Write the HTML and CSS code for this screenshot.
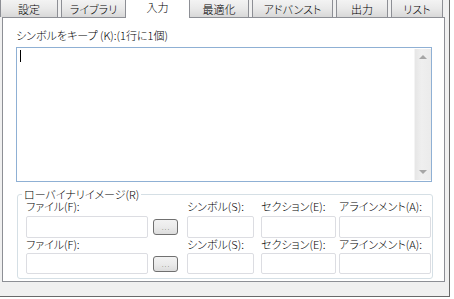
FILE: index.html
```html
<!DOCTYPE html>
<html lang="ja">
<head>
  <meta charset="UTF-8">
  <title>入力</title>
  <link rel="stylesheet" href="styles.css">
</head>
<body>
  <div class="window">
    <div class="tabs">
      <div class="tab tab-settings">設定</div>
      <div class="tab tab-library">ライブラリ</div>
      <div class="tab tab-active">入力</div>
      <div class="tab tab-optimize">最適化</div>
      <div class="tab tab-advanced">アドバンスト</div>
      <div class="tab tab-output">出力</div>
      <div class="tab tab-list">リスト</div>
    </div>

    <div class="panel">
      <div class="keep-label">シンボルをキープ (K):(1行に1個)</div>
      <div class="memo">
        <div class="memo-text"><span class="caret"></span></div>
        <div class="vscroll">
          <span class="arrow arrow-up"></span>
          <span class="arrow arrow-down"></span>
        </div>
      </div>

      <fieldset class="group">
        <legend>ローバイナリイメージ(R)</legend>
        <div class="image-grid">
          <span class="field-label col-file">ファイル(F):</span>
          <span class="field-label col-symbol">シンボル(S):</span>
          <span class="field-label col-section">セクション(E):</span>
          <span class="field-label col-align">アラインメント(A):</span>
          <span class="box box-file"></span>
          <span class="browse">...</span>
          <span class="box box-symbol"></span>
          <span class="box box-section"></span>
          <span class="box box-align"></span>

          <span class="field-label col-file">ファイル(F):</span>
          <span class="field-label col-symbol">シンボル(S):</span>
          <span class="field-label col-section">セクション(E):</span>
          <span class="field-label col-align">アラインメント(A):</span>
          <span class="box box-file"></span>
          <span class="browse">...</span>
          <span class="box box-symbol"></span>
          <span class="box box-section"></span>
          <span class="box box-align"></span>
        </div>
      </fieldset>
    </div>
  </div>
</body>
</html>
```

FILE: styles.css
```css
* { box-sizing: border-box; }
body { margin: 0; background: #fff; font-family: "Noto Sans CJK JP", "Noto Sans", sans-serif; font-size: 11px; font-weight: 300; color: #000; font-feature-settings: "palt"; }

.window { width: 450px; height: 297px; background: #f0f0f0; border-right: 1px solid #696969; border-bottom: 1px solid #696969; overflow: hidden; }

/* tab strip */
.tabs { display: flex; gap: 3px; height: 17px; position: relative; z-index: 1; }
.tab { height: 17px; border: 1px solid #8d8f95; border-top: none; border-bottom: none; background: linear-gradient(#f3f3f3, #e9e9e9 50%, #d8d8d8); text-align: center; line-height: 15px; padding-top: 2px; white-space: nowrap; }
.tab-settings { width: 58px; }
.tab-library { width: 65px; }
.tab-active { width: 63px; height: 18px; margin: 0 -3px; border: none; background: #fff; padding-top: 1px; line-height: 12px; }
.tab-optimize { width: 60px; }
.tab-advanced { width: 81px; }
.tab-output { width: 52px; }
.tab-list { width: 52px; }

/* page */
.panel { margin-left: 2px; width: 443px; height: 265px; background: #fff; border: 1px solid #8d8f95; padding: 10px 0 0 13px; }
.keep-label { line-height: 14px; height: 14px; }

.memo { display: flex; width: 416px; height: 135px; margin-top: 5px; border: 1px solid #8fb0d4; background: #fff; }
.memo-text { flex: 1; padding: 2px 0 0 3px; }
.caret { display: block; width: 1px; height: 12px; background: #000; }
.vscroll { position: relative; width: 17px; margin: 1px 0 1px 0; background: linear-gradient(90deg, #e6e6e6, #efefef 40%, #ebebeb); border-left: 1px solid #f4f4f4; }
.arrow { position: absolute; left: 4px; width: 0; height: 0; border-left: 4px solid transparent; border-right: 4px solid transparent; }
.arrow-up { top: 6px; border-bottom: 4px solid #a6a6a6; }
.arrow-down { bottom: 6px; border-top: 4px solid #a6a6a6; }

/* group box */
.group { margin: 6px 0 0 1px; width: 415px; height: 91px; border: 1px solid #d5dfe5; border-radius: 3px; padding: 0 0 0 8px; }
.group legend { margin-left: -4px; padding: 0 2px; line-height: 12px; }
.image-grid { display: grid; grid-template-columns: 127px 34px 74px 78px 93px; grid-template-rows: 16px 22px 15px 21px; }
.field-label { line-height: 13px; white-space: nowrap; }
.col-file { grid-column: 1; }
.col-symbol { grid-column: 3; }
.col-section { grid-column: 4; }
.col-align { grid-column: 5; }
.box { display: block; height: 100%; background: #fff; border: 1px solid #dcdde2; border-radius: 2px; }
.box-file { width: 122px; }
.box-symbol { width: 67px; }
.box-section { width: 75px; }
.box-align { width: 92px; }
.browse { align-self: center; width: 25px; height: 16px; border: 1px solid #707070; border-radius: 3px; background: linear-gradient(#f2f2f2, #ebebeb 50%, #dcdcdc); font-family: "DejaVu Sans", sans-serif; font-size: 9px; line-height: 15px; text-align: center; }
```
